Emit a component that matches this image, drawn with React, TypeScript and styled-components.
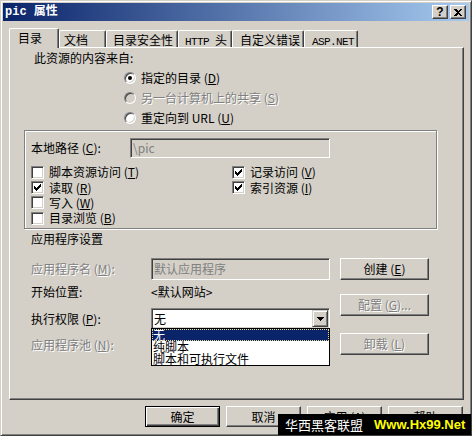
import React from "react";
import styled, { createGlobalStyle } from "styled-components";

const FACE = "#D4D0C8";
const FONT = `"Noto Sans CJK SC", "Liberation Sans", sans-serif`;

const Global = createGlobalStyle`
  html, body { margin: 0; padding: 0; background: ${FACE}; }
  body { font-family: ${FONT}; font-size: 12px; line-height: 14px; color: #000; }
  * { box-sizing: border-box; }
  u { text-decoration: underline; text-underline-offset: 1px; }
`;

const Window = styled.div`
  position: relative;
  width: 472px;
  height: 436px;
  background: ${FACE};
  border: 1px solid;
  border-color: ${FACE} #404040 #404040 ${FACE};
  box-shadow: inset 1px 1px 0 #fff, inset -1px -1px 0 #808080;
  padding: 2px;
  display: flex;
  flex-direction: column;
  overflow: hidden;
`;

const TitleBar = styled.div`
  height: 18px;
  flex: none;
  display: flex;
  align-items: center;
  padding-left: 2px;
  background: linear-gradient(to right, #0a246a, #a6caf0);
`;

const TitleText = styled.span`
  color: #fff;
  font-family: "Liberation Mono", "Noto Sans CJK SC", monospace;
  font-weight: bold;
  font-size: 12px;
  line-height: 14px;
`;

const TitleButtons = styled.div`
  margin-left: auto;
  margin-right: 3px;
  display: flex;
  gap: 2px;
`;

const TitleButton = styled.div`
  width: 16px;
  height: 14px;
  background: ${FACE};
  border: 1px solid;
  border-color: #fff #404040 #404040 #fff;
  box-shadow: inset -1px -1px 0 #808080;
  display: flex;
  align-items: center;
  justify-content: center;
  font-family: "Liberation Sans", sans-serif;
  font-weight: bold;
  font-size: 12px;
  line-height: 12px;
  color: #000;
`;

const Body = styled.div`
  flex: 1;
  display: flex;
  flex-direction: column;
  padding: 7px 5px 0 6px;
`;

const TabStrip = styled.div`
  display: flex;
  align-items: flex-end;
  height: 20px;
  margin-bottom: -1px;
  position: relative;
  z-index: 1;
`;

const Tab = styled.div<{ $w: number; $pl: number; $active?: boolean }>`
  width: ${(p) => p.$w}px;
  height: ${(p) => (p.$active ? 20 : 17)}px;
  margin-bottom: ${(p) => (p.$active ? 0 : 1)}px;
  padding: 2px 0 0 ${(p) => p.$pl}px;
  background: ${FACE};
  border-top: 1px solid #fff;
  border-left: 1px solid #fff;
  border-right: 1px solid #404040;
  border-radius: 2px 2px 0 0;
  box-shadow: inset -1px 0 0 #808080;
  white-space: nowrap;
  font-size: 12px;
  line-height: 14px;
`;

const Latin = styled.span`
  font-family: "Liberation Mono", monospace;
  font-size: 11px;
  letter-spacing: -0.6px;
`;

const Panel = styled.div`
  position: relative;
  width: 455px;
  height: 353px;
  display: flex;
  flex-direction: column;
  border: 1px solid;
  border-color: #fff #404040 #404040 #fff;
  box-shadow: inset -1px -1px 0 #808080;
`;

const Label = styled.div<{ $disabled?: boolean }>`
  white-space: nowrap;
  line-height: 14px;
  color: ${(p) => (p.$disabled ? "#808080" : "#000")};
  text-shadow: ${(p) => (p.$disabled ? "1px 1px 0 #fff" : "none")};
`;

const SourceLabel = styled(Label)`
  margin: 3px 0 0 24px;
`;

const RadioList = styled.div`
  margin: 3px 0 0 114px;
  display: flex;
  flex-direction: column;
`;

const RadioRow = styled.div`
  height: 20px;
  display: flex;
  align-items: center;
  gap: 5px;
`;

const RadioCircle = styled.span<{ $checked?: boolean; $disabled?: boolean }>`
  position: relative;
  width: 12px;
  height: 12px;
  flex: none;
  border-radius: 50%;
  background: ${(p) => (p.$disabled ? FACE : "#fff")};
  border: 1px solid;
  border-color: #808080 #fff #fff #808080;
  box-shadow: inset 1px 1px 0 #404040, inset -1px -1px 0 ${FACE};
  &::after {
    content: "";
    display: ${(p) => (p.$checked ? "block" : "none")};
    position: absolute;
    left: 3px;
    top: 3px;
    width: 4px;
    height: 4px;
    border-radius: 50%;
    background: #000;
  }
`;

const GroupBox = styled.div`
  margin: 2px 0 0 14px;
  width: 413px;
  height: 99px;
  border: 1px solid #808080;
  box-shadow: inset 1px 1px 0 #fff, 1px 1px 0 #fff;
  padding: 7px 0 0 6px;
  display: flex;
  flex-direction: column;
`;

const PathRow = styled.div`
  display: flex;
  align-items: center;
  height: 20px;
`;

const FieldLabel = styled(Label)<{ $w: number }>`
  width: ${(p) => p.$w}px;
  flex: none;
`;

const SunkenField = styled.div<{ $w?: number }>`
  ${(p) => (p.$w ? `width: ${p.$w}px;` : "flex: 1;")}
  height: 100%;
  display: flex;
  align-items: center;
  padding-left: 2px;
  background: ${FACE};
  color: #808080;
  border: 1px solid;
  border-color: #808080 #fff #fff #808080;
  box-shadow: inset 1px 1px 0 #404040, inset -1px -1px 0 ${FACE};
  white-space: nowrap;
`;

const CheckGrid = styled.div`
  margin-top: 6px;
  display: grid;
  grid-template-columns: 201px auto;
  grid-template-rows: 16px 15px 15px 16px;
`;

const CheckRow = styled.div<{ $col: number; $row: number }>`
  grid-column: ${(p) => p.$col};
  grid-row: ${(p) => p.$row};
  display: flex;
  align-items: center;
  gap: 5px;
  white-space: nowrap;
`;

const CheckBox = styled.span`
  width: 13px;
  height: 13px;
  flex: none;
  background: #fff;
  border: 1px solid;
  border-color: #808080 #fff #fff #808080;
  box-shadow: inset 1px 1px 0 #404040, inset -1px -1px 0 ${FACE};
  display: flex;
  align-items: center;
  justify-content: center;
`;

const SectionLabel = styled(Label)`
  margin: 3px 0 0 21px;
`;

const AppSection = styled.div`
  display: flex;
  gap: 10px;
  margin: 12px 0 0 21px;
`;

const LeftCol = styled.div`
  width: 299px;
  display: flex;
  flex-direction: column;
`;

const FormRow = styled.div<{ $h: number; $mt?: number }>`
  height: ${(p) => p.$h}px;
  margin-top: ${(p) => p.$mt ?? 0}px;
  display: flex;
  align-items: center;
`;

const RightCol = styled.div`
  display: flex;
  flex-direction: column;
`;

const PushButton = styled.div<{ $w: number; $h: number; $mt?: number; $disabled?: boolean; $default?: boolean }>`
  width: ${(p) => p.$w}px;
  height: ${(p) => p.$h}px;
  margin-top: ${(p) => p.$mt ?? 0}px;
  flex: none;
  display: flex;
  align-items: center;
  justify-content: center;
  background: ${FACE};
  white-space: nowrap;
  color: ${(p) => (p.$disabled ? "#808080" : "#000")};
  text-shadow: ${(p) => (p.$disabled ? "1px 1px 0 #fff" : "none")};
  ${(p) =>
    p.$default
      ? `border: 1px solid #000;
         box-shadow: inset 1px 1px 0 #fff, inset -1px -1px 0 #404040, inset -2px -2px 0 #808080;`
      : `border: 1px solid;
         border-color: #fff #404040 #404040 #fff;
         box-shadow: inset -1px -1px 0 #808080;`}
`;

const Combo = styled.div`
  position: relative;
  flex: 1;
  height: 100%;
  display: flex;
  align-items: center;
  background: #fff;
  border: 1px solid;
  border-color: #808080 #fff #fff #808080;
  box-shadow: inset 1px 1px 0 #404040, inset -1px -1px 0 ${FACE};
  padding: 1px;
`;

const ComboText = styled.div`
  flex: 1;
  padding-left: 1px;
`;

const ComboArrow = styled.div`
  width: 16px;
  height: 17px;
  flex: none;
  background: ${FACE};
  border: 1px solid;
  border-color: ${FACE} #404040 #404040 ${FACE};
  box-shadow: inset 1px 1px 0 #fff, inset -1px -1px 0 #808080;
  display: flex;
  align-items: center;
  justify-content: center;
`;

const DropList = styled.div`
  position: absolute;
  top: 100%;
  left: -1px;
  right: -1px;
  background: #fff;
  border: 1px solid #000;
  z-index: 5;
  display: flex;
  flex-direction: column;
`;

const DropItem = styled.div<{ $selected?: boolean }>`
  height: 12px;
  line-height: 12px;
  padding-left: 1px;
  white-space: nowrap;
  background: ${(p) => (p.$selected ? "#0A246A" : "#fff")};
  color: ${(p) => (p.$selected ? "#fff" : "#000")};
  outline: ${(p) => (p.$selected ? "1px dotted #f0d890" : "none")};
  outline-offset: -1px;
`;

const ButtonBar = styled.div`
  margin-top: 6px;
  padding-right: 1px;
  display: flex;
  justify-content: flex-end;
  gap: 6px;
`;

const Watermark = styled.div`
  position: absolute;
  right: -1px;
  bottom: -1px;
  width: 194px;
  height: 22px;
  background: #000;
  display: flex;
  align-items: center;
  padding-left: 7px;
  gap: 11px;
  z-index: 10;
`;

const WmCn = styled.span`
  color: #fff;
  font-size: 13px;
  line-height: 16px;
`;

const WmUrl = styled.span`
  color: #ffff00;
  font-family: "Liberation Sans", sans-serif;
  font-weight: bold;
  font-size: 13px;
  line-height: 16px;
`;

const Check = () => (
  <svg width="7" height="7" viewBox="0 0 7 7" shapeRendering="crispEdges">
    <path d="M0 2 L2 4 L7 -1 L7 2 L2 7 L0 5 Z" fill="#000" />
  </svg>
);

const Radio = ({ checked, disabled, children }: { checked?: boolean; disabled?: boolean; children: React.ReactNode }) => (
  <RadioRow>
    <RadioCircle $checked={checked} $disabled={disabled} />
    <Label $disabled={disabled}>{children}</Label>
  </RadioRow>
);

const CheckItem = ({ col, row, checked, children }: { col: number; row: number; checked?: boolean; children: React.ReactNode }) => (
  <CheckRow $col={col} $row={row}>
    <CheckBox>{checked && <Check />}</CheckBox>
    <Label>{children}</Label>
  </CheckRow>
);

const tabs: { key: string; label: React.ReactNode; w: number; pl: number; active?: boolean }[] = [
  { key: "dir", label: "目录", w: 50, pl: 8, active: true },
  { key: "doc", label: "文档", w: 47, pl: 4 },
  { key: "sec", label: "目录安全性", w: 72, pl: 6 },
  { key: "http", label: <><Latin>HTTP </Latin>头</>, w: 54, pl: 6 },
  { key: "err", label: "自定义错误", w: 72, pl: 7 },
  { key: "asp", label: <Latin>ASP.NET</Latin>, w: 54, pl: 7 },
];

export default function App() {
  return (
    <>
      <Global />
      <Window>
        <TitleBar>
          <TitleText>pic 属性</TitleText>
          <TitleButtons>
            <TitleButton>?</TitleButton>
            <TitleButton>
              <svg width="8" height="7" viewBox="0 0 8 7" shapeRendering="crispEdges">
                <path d="M0 0 L2 0 L4 2 L6 0 L8 0 L5 3.5 L8 7 L6 7 L4 5 L2 7 L0 7 L3 3.5 Z" fill="#000" />
              </svg>
            </TitleButton>
          </TitleButtons>
        </TitleBar>
        <Body>
          <TabStrip>
            {tabs.map((t) => (
              <Tab key={t.key} $w={t.w} $pl={t.pl} $active={t.active}>
                {t.label}
              </Tab>
            ))}
          </TabStrip>
          <Panel>
            <SourceLabel>此资源的内容来自:</SourceLabel>
            <RadioList>
              <Radio checked>
                指定的目录 (<u>D</u>)
              </Radio>
              <Radio disabled>
                另一台计算机上的共享 (<u>S</u>)
              </Radio>
              <Radio>
                重定向到 URL (<u>U</u>)
              </Radio>
            </RadioList>
            <GroupBox>
              <PathRow>
                <FieldLabel $w={99}>
                  本地路径 (<u>C</u>):
                </FieldLabel>
                <SunkenField $w={200}>\pic</SunkenField>
              </PathRow>
              <CheckGrid>
                <CheckItem col={1} row={1}>
                  脚本资源访问 (<u>T</u>)
                </CheckItem>
                <CheckItem col={1} row={2} checked>
                  读取 (<u>R</u>)
                </CheckItem>
                <CheckItem col={1} row={3}>
                  写入 (<u>W</u>)
                </CheckItem>
                <CheckItem col={1} row={4}>
                  目录浏览 (<u>B</u>)
                </CheckItem>
                <CheckItem col={2} row={1} checked>
                  记录访问 (<u>V</u>)
                </CheckItem>
                <CheckItem col={2} row={2} checked>
                  索引资源 (<u>I</u>)
                </CheckItem>
              </CheckGrid>
            </GroupBox>
            <SectionLabel>应用程序设置</SectionLabel>
            <AppSection>
              <LeftCol>
                <FormRow $h={22}>
                  <FieldLabel $w={120} $disabled>
                    应用程序名 (<u>M</u>):
                  </FieldLabel>
                  <SunkenField>默认应用程序</SunkenField>
                </FormRow>
                <FormRow $h={24}>
                  <FieldLabel $w={120}>开始位置:</FieldLabel>
                  <Label>&lt;默认网站&gt;</Label>
                </FormRow>
                <FormRow $h={21} $mt={4}>
                  <FieldLabel $w={120}>
                    执行权限 (<u>P</u>):
                  </FieldLabel>
                  <Combo>
                    <ComboText>无</ComboText>
                    <ComboArrow>
                      <svg width="7" height="4" viewBox="0 0 7 4" shapeRendering="crispEdges">
                        <path d="M0 0 H7 L3.5 4 Z" fill="#000" />
                      </svg>
                    </ComboArrow>
                    <DropList>
                      <DropItem $selected>无</DropItem>
                      <DropItem>纯脚本</DropItem>
                      <DropItem>脚本和可执行文件</DropItem>
                    </DropList>
                  </Combo>
                </FormRow>
                <FormRow $h={20} $mt={6}>
                  <FieldLabel $w={120} $disabled>
                    应用程序池 (<u>N</u>):
                  </FieldLabel>
                </FormRow>
              </LeftCol>
              <RightCol>
                <PushButton $w={89} $h={22}>
                  创建 (<u>E</u>)
                </PushButton>
                <PushButton $w={89} $h={22} $mt={14} $disabled>
                  配置 (<u>G</u>)...
                </PushButton>
                <PushButton $w={89} $h={22} $mt={17} $disabled>
                  卸载 (<u>L</u>)
                </PushButton>
              </RightCol>
            </AppSection>
          </Panel>
          <ButtonBar>
            <PushButton $w={75} $h={21} $default>
              确定
            </PushButton>
            <PushButton $w={75} $h={21}>
              取消
            </PushButton>
            <PushButton $w={75} $h={21}>
              应用 (<u>A</u>)
            </PushButton>
            <PushButton $w={75} $h={21}>
              帮助
            </PushButton>
          </ButtonBar>
        </Body>
        <Watermark>
          <WmCn>华西黑客联盟</WmCn>
          <WmUrl>Www.Hx99.Net</WmUrl>
        </Watermark>
      </Window>
    </>
  );
}
